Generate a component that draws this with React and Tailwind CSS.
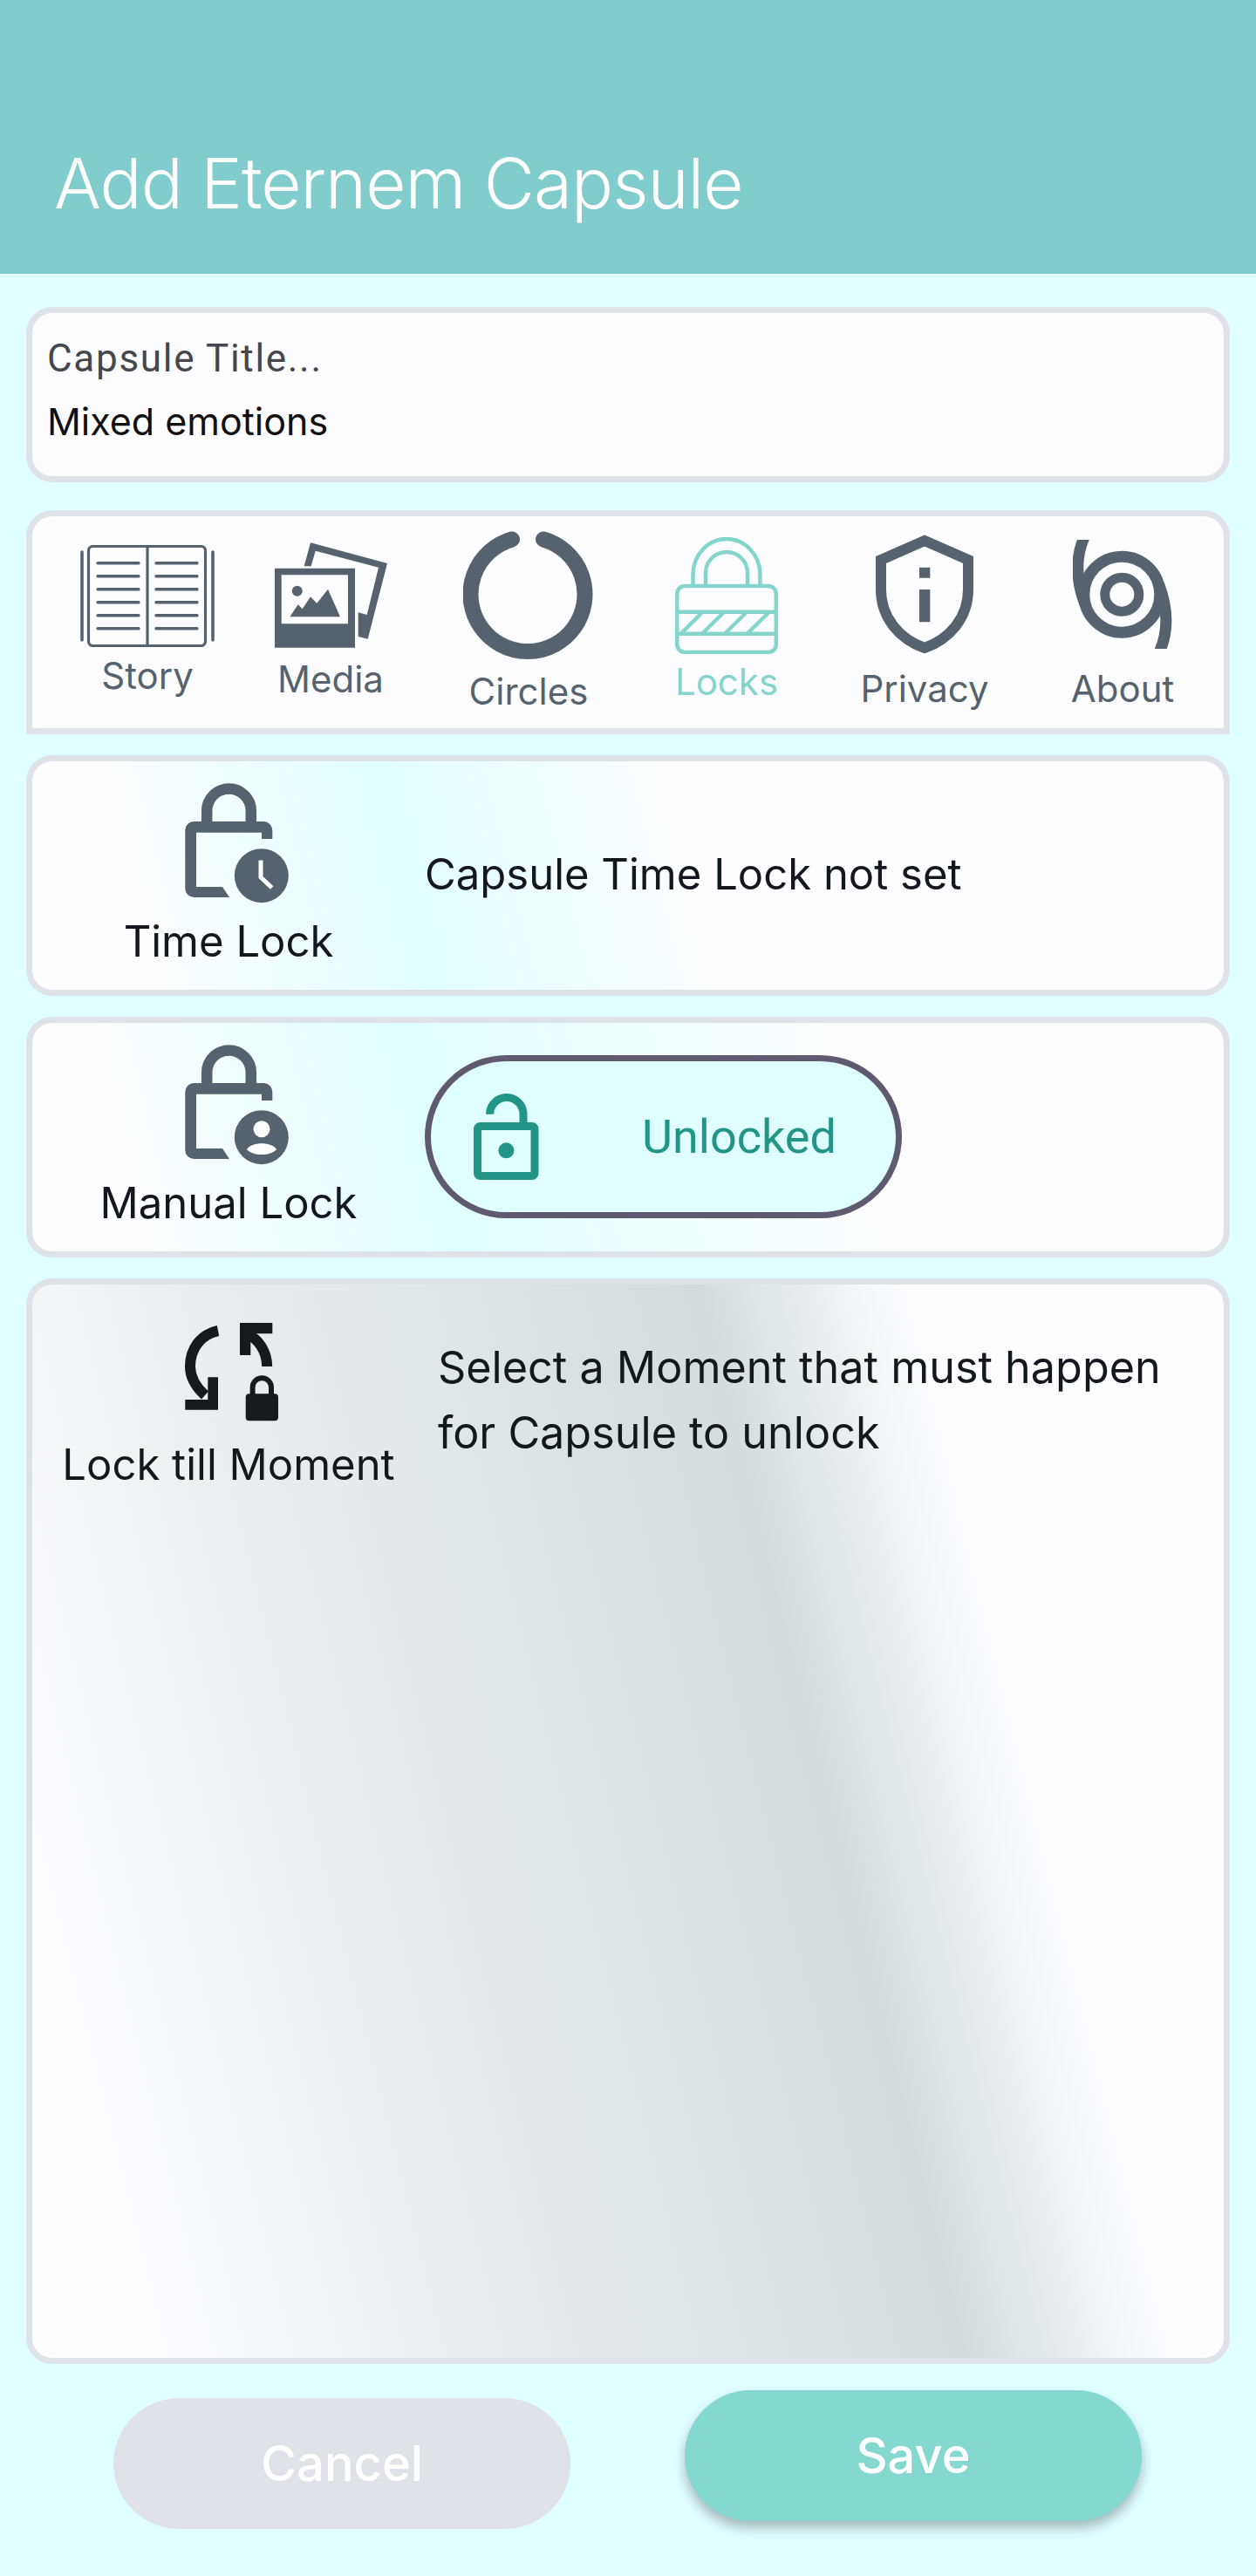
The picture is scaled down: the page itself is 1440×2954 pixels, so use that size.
const INTER = "font-['Inter',sans-serif]"
const GRAY = '#56636e'

const StoryIcon = () => (
  <svg width="154" height="117" viewBox="0 0 154 117" fill="none" stroke={GRAY}>
    <rect x="9.5" y="1.5" width="134" height="114" rx="5" strokeWidth="3.2" />
    <path d="M77 1.5V115.5" strokeWidth="3.2" />
    <path d="M2 8V109M152 8V109" strokeWidth="3.6" strokeLinecap="round" />
    <path d="M20 20.7H67M20 35.7H67M20 50.7H67M20 65.7H67M20 80.7H67M20 95.7H67M87 20.7H134M87 35.7H134M87 50.7H134M87 65.7H134M87 80.7H134M87 95.7H134" strokeWidth="3.4" strokeLinecap="round" />
  </svg>
)

const MediaIcon = () => (
  <svg width="129" height="121" viewBox="0 0 129 121" fill={GRAY}>
    <path d="M33.7 27.3L41 .3L129 24L106.7 110.7L95.7 108V80.3L105.7 83L119 28.7L46.7 9.7L41.7 27.3Z" />
    <path fillRule="evenodd" d="M0 29.7H92V120.7H0ZM7.7 37.3V93.3H84V37.3Z" />
    <circle cx="25.7" cy="55.7" r="6" />
    <path d="M17.3 85.3L26.7 71.3L31.7 76.3L41 62.3L48.3 69.7L61 53.7L75 85.3Z" />
  </svg>
)

const CirclesIcon = () => (
  <svg width="150" height="147" viewBox="0 0 150 147" fill="none">
    <path d="M92 9.5A65.5 65.5 0 1 1 56 9.5" stroke={GRAY} strokeWidth="18" strokeLinecap="round" />
  </svg>
)

const LocksIcon = () => (
  <svg width="118" height="134" viewBox="0 0 118 134" fill="none" stroke="#84d5cb" strokeWidth="4.5">
    <rect x="2.2" y="56" width="113.6" height="76" rx="9" />
    <path d="M20.5 55V43A38.5 41 0 0 1 97.5 43V55" />
    <path d="M35 55V41A24 24 0 0 1 83 41V55" />
    <path d="M2 85.7H116M2 110.7H116" />
    <path d="M6.7 110.7L30 87.3M31.7 110L55 87M57.7 110L81 87M83.3 110L106.7 87" />
  </svg>
)

const PrivacyIcon = () => (
  <svg width="112" height="137" viewBox="0 0 112 137" fill="none">
    <path d="M56 7L106 29V63C106 95 85 120 56 130C27 120 6 95 6 63V29Z" stroke={GRAY} strokeWidth="12" />
    <path d="M50 37.7H62.3V49.7H50ZM50 63H62.3V100.3H50Z" fill={GRAY} />
  </svg>
)

const AboutIcon = () => (
  <svg width="114" height="125" viewBox="0 0 114 125" fill="none" stroke={GRAY}>
    <circle cx="56.3" cy="62.7" r="19.5" strokeWidth="11" />
    <circle cx="56.3" cy="62.7" r="43.5" strokeWidth="13" />
    <path d="M13 -3C3 20 3 45 14 74" strokeWidth="13" />
    <path d="M99.6 128C109.6 105 109.6 80 98.6 51" strokeWidth="13" />
  </svg>
)

const LockBase = ({ children }) => (
  <svg className="ml-[19px]" width="119" height="138" viewBox="0 0 119 138" fill={GRAY}>
    <path d="M25.2 46V31.8A25.3 25.3 0 0 1 75.8 31.8V46" fill="none" stroke={GRAY} strokeWidth="12.5" />
    <path d="M10.3 44H90.3A10 10 0 0 1 100.3 54V64H88V56.8H13V118.9H43L51 131H10.3A10 10 0 0 1 .3 121V54A10 10 0 0 1 10.3 44Z" />
    <circle cx="87.8" cy="106.2" r="31" />
    {children}
  </svg>
)

const TimeLockIcon = () => (
  <LockBase>
    <path d="M87 88.4V108L99.7 120" fill="none" stroke="#fdfdff" strokeWidth="5" />
  </LockBase>
)

const ManualLockIcon = () => (
  <LockBase>
    <circle cx="88" cy="96.8" r="9.5" fill="#fdfdff" />
    <path d="M71 120C76 111 100 111 105 120C98 128 78 128 71 120Z" fill="#fdfdff" />
  </LockBase>
)

const UnlockIcon = () => (
  <svg width="75" height="99" viewBox="0 0 75 99" fill="none" stroke="#229588">
    <rect x="4.5" y="37.5" width="65.5" height="57" rx="3" strokeWidth="9" />
    <path d="M18.6 23.7A19.2 19.2 0 0 1 57 23.7V34" strokeWidth="9" />
    <circle cx="37.4" cy="65.3" r="9" fill="#229588" stroke="none" />
  </svg>
)

const MomentIcon = () => (
  <svg className="ml-[7px]" width="107" height="113" viewBox="0 0 107 113" fill="none" stroke="#17191c">
    <path d="M38 9C18 13 6 30 6 50C6 62 12 73 23 83" strokeWidth="12" />
    <path d="M26.3 62.3H38V99.7H.3V88H26.3Z" fill="#17191c" stroke="none" />
    <path d="M70 12C84 18 94 32 94.2 50" strokeWidth="12" />
    <path d="M63 0H100.3V12.3H75.3V37H63Z" fill="#17191c" stroke="none" />
    <rect x="69.7" y="81.3" width="37.3" height="31" rx="4" fill="#17191c" stroke="none" />
    <path d="M77.6 83V74A10.7 10.7 0 0 1 99 74V83" strokeWidth="6" />
  </svg>
)

const TABS = [
  { id: 'story', label: 'Story', Icon: StoryIcon, wrap: 'pt-[33px]', gap: 'mt-[10px]', text: 'text-[#56636e]' },
  { id: 'media', label: 'Media', Icon: MediaIcon, wrap: 'pt-[30px] -ml-[17px]', gap: 'mt-[13px]', text: 'text-[#56636e]' },
  { id: 'circles', label: 'Circles', Icon: CirclesIcon, wrap: 'pt-[17px]', gap: 'mt-[14px]', text: 'text-[#56636e]' },
  { id: 'locks', label: 'Locks', Icon: LocksIcon, wrap: 'pt-[24px]', gap: 'mt-[9px]', text: 'text-[#84d5cb]' },
  { id: 'privacy', label: 'Privacy', Icon: PrivacyIcon, wrap: 'pt-[21px]', gap: 'mt-[17px]', text: 'text-[#56636e]' },
  { id: 'about', label: 'About', Icon: AboutIcon, wrap: 'pt-[27px]', gap: 'mt-[23px]', text: 'text-[#56636e]' },
]

const LockLabel = ({ children }) => (
  <p className={`${INTER} text-[49px] leading-[50px] text-[#14181c] whitespace-nowrap`}>{children}</p>
)

export default function App() {
  return (
    <div className={`${INTER} h-[2954px] bg-[#e0ffff] overflow-hidden`}>
      <header className="h-[314px] bg-[#81cdcd] pl-[62px] pt-[160px]">
        <h1 className="text-[80px] leading-[100px] tracking-[-1px] font-light text-white whitespace-nowrap">Add Eternem Capsule</h1>
      </header>

      <main className="px-[30px] pt-[38px] flex flex-col">
        <section className="h-[201px] rounded-[30px] border-[7px] border-[#dfe3e8] bg-[#fdfdff] pl-[17px] pt-[27px]">
          <p className="font-['Roboto',sans-serif] text-[44px] leading-[50px] tracking-[1.7px] text-[#45474c]">Capsule Title...</p>
          <p className="mt-[22px] text-[43px] leading-[50px] text-[#111]">Mixed emotions</p>
        </section>

        <nav className="mt-[32px] h-[257px] rounded-t-[30px] border-[7px] border-[#dfe3e8] bg-[#fdfdff] flex gap-[27px] pl-[32px]">
          {TABS.map(({ id, label, Icon, wrap, gap, text }) => (
            <div key={id} className={`w-[200px] flex flex-col items-center ${wrap}`}>
              <Icon />
              <span className={`${gap} ${text} text-[42px] leading-[46px]`}>{label}</span>
            </div>
          ))}
        </nav>

        <section className="mt-[24px] h-[276px] rounded-[30px] border-[7px] border-[#dfe3e8] bg-[linear-gradient(76deg,#fdfdff_11%,#e0ffff_32%,#fdfdff_54%)] flex">
          <div className="w-[450px] shrink-0 flex flex-col items-center pt-[25px]">
            <TimeLockIcon />
            <div className="mt-[19px]"><LockLabel>Time Lock</LockLabel></div>
          </div>
          <p className="self-center text-[49px] leading-[60px] text-[#14181c] -mt-[2px]">Capsule Time Lock not set</p>
        </section>

        <section className="mt-[24px] h-[276px] rounded-[30px] border-[7px] border-[#dfe3e8] bg-[linear-gradient(76deg,#fdfdff_10%,#e0ffff_34%,#fdfdff_68%)] flex">
          <div className="w-[450px] shrink-0 flex flex-col items-center pt-[25px]">
            <ManualLockIcon />
            <div className="mt-[19px]"><LockLabel>Manual Lock</LockLabel></div>
          </div>
          <div className="self-start mt-[37px] w-[547px] h-[187px] rounded-full border-[7px] border-[#5f5a70] bg-[#e0ffff] flex items-center pl-[49px]">
            <UnlockIcon />
            <span className="ml-[118px] font-['Roboto',sans-serif] text-[54px] leading-[60px] text-[#229588]">Unlocked</span>
          </div>
        </section>

        <section className="mt-[24px] h-[1245px] rounded-[30px] border-[7px] border-[#dfe3e8] bg-[linear-gradient(76deg,#fdfdff_9%,#eef0f1_25%,#d5dcdb_64%,#fdfdff_78%)] flex">
          <div className="w-[450px] shrink-0 flex flex-col items-center pt-[44px]">
            <MomentIcon />
            <div className="mt-[25px]"><LockLabel>Lock till Moment</LockLabel></div>
          </div>
          <p className="pl-[15px] pt-[57px] text-[50.3px] leading-[75px] text-[#14181c] whitespace-nowrap">
            Select a Moment that must happen<br />for Capsule to unlock
          </p>
        </section>

        <div className="flex">
          <button className="mt-[39px] ml-[100px] w-[524px] h-[150px] rounded-full bg-[#dfe3e8] text-white text-[56px] font-medium">Cancel</button>
          <button className="mt-[30px] ml-[131px] w-[524px] h-[150px] rounded-full bg-[#84d8d0] text-white text-[56px] font-medium shadow-[0_8px_14px_rgba(0,0,0,0.28)]">Save</button>
        </div>
      </main>
    </div>
  )
}
